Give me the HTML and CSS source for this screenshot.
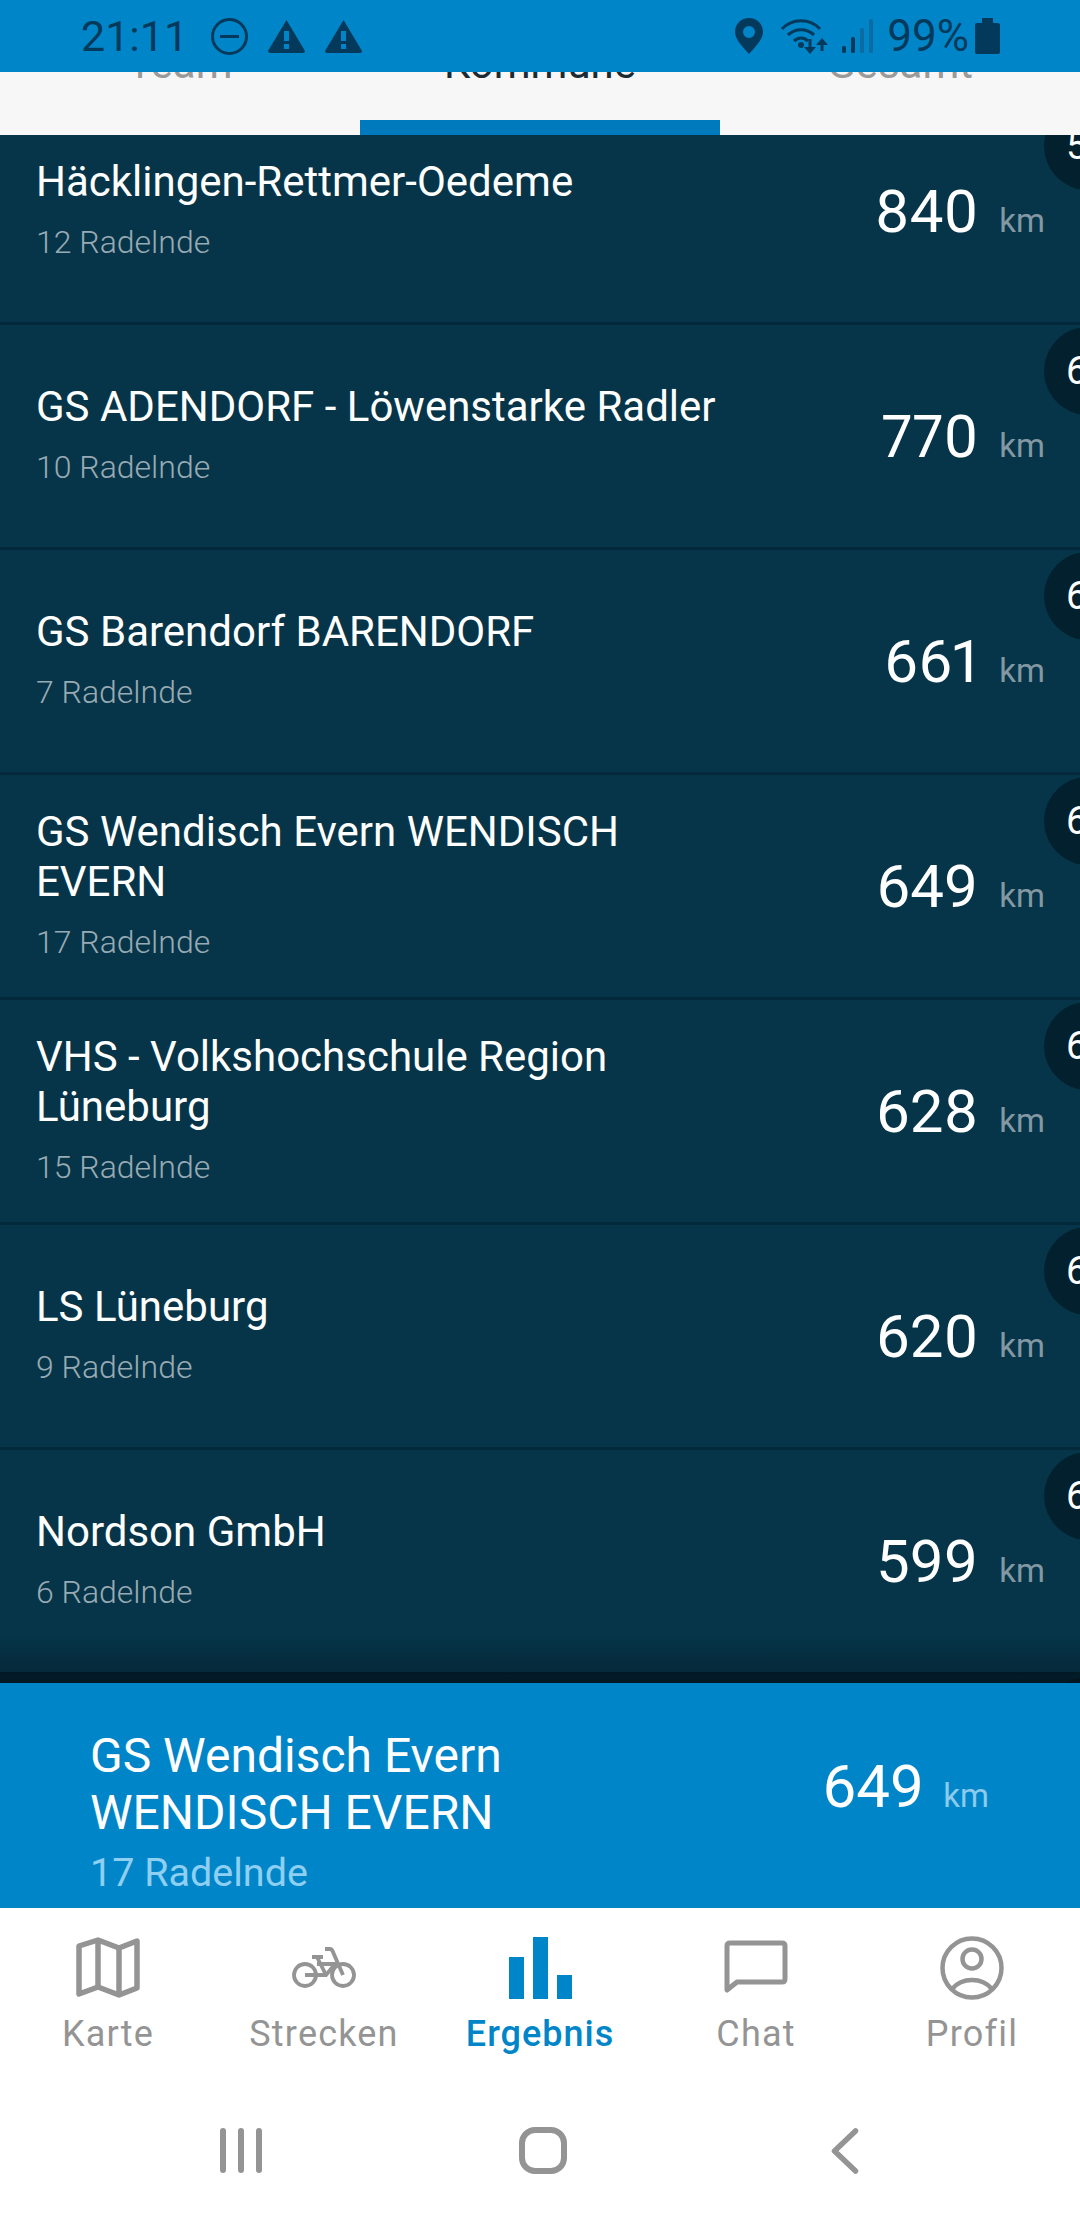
FILE: index.html
```html
<!DOCTYPE html>
<html lang="de">
<head>
  <meta charset="UTF-8">
  <meta name="viewport" content="width=device-width, initial-scale=1.0">
  <title>Ergebnis</title>
  <link rel="stylesheet" href="styles.css">
</head>
<body>
<div class="app">
  <div class="statusbar">
    <span class="clock">21:11</span>
    <svg class="st-dnd" viewBox="0 0 37 37"><circle cx="18.5" cy="18.5" r="17" fill="none" stroke="#033a5c" stroke-width="3"/><rect x="9" y="17" width="19" height="3" fill="#033a5c"/></svg>
    <svg class="st-warn" viewBox="0 0 37 33"><path fill-rule="evenodd" fill="#033a5c" d="M18.5 0 L37 31 Q37 33 35 33 L2 33 Q0 33 0 31 Z M16 11 V21 H21 V11 Z M16 24 V29 H21 V24 Z"/></svg>
    <svg class="st-warn" viewBox="0 0 37 33"><path fill-rule="evenodd" fill="#033a5c" d="M18.5 0 L37 31 Q37 33 35 33 L2 33 Q0 33 0 31 Z M16 11 V21 H21 V11 Z M16 24 V29 H21 V24 Z"/></svg>
    <div class="status-right">
      <svg class="st-pin" viewBox="0 0 28 36"><path fill-rule="evenodd" fill="#033a5c" d="M14 0 C6 0 0 6 0 14 C0 22 9 30 14 36 C19 30 28 22 28 14 C28 6 22 0 14 0 Z M14 8 A6 6 0 1 1 14 20 A6 6 0 1 1 14 8 Z"/></svg>
      <svg class="st-wifi" viewBox="0 0 48 36"><g fill="none" stroke="#033a5c" stroke-width="3.2"><path d="M2 11 C12 0 30 0 40 11"/><path d="M8 17 C15 10 27 10 34 17"/><path d="M14 23 C18 19 24 19 28 23"/></g><circle cx="21" cy="27" r="3" fill="#033a5c"/><path fill="#033a5c" d="M30 36 L24 29 H28.500 V21 H31.500 V29 H36 Z M42 20 L48 27 H43.500 V33 H40.500 V27 H36 Z"/></svg>
      <svg class="st-signal" viewBox="0 0 31 34"><rect x="0" y="27" width="4" height="7" rx="1.500" fill="#033a5c"/><rect x="9" y="18" width="4" height="16" rx="1.500" fill="#033a5c"/><rect x="18" y="9" width="4" height="25" rx="1.500" fill="#0a6ca3"/><rect x="27" y="0" width="4" height="34" rx="1.500" fill="#0a6ca3"/></svg>
      <span class="percent">99%</span>
      <svg class="st-batt" viewBox="0 0 25 36"><path fill="#033a5c" d="M7 0 H18 V5 H23 Q25 5 25 7 V34 Q25 36 23 36 H2 Q0 36 0 34 V7 Q0 5 2 5 H7 Z"/></svg>
    </div>
  </div>

  <div class="tabs">
    <div class="tab">Team</div>
    <div class="tab active">Kommune</div>
    <div class="tab">Gesamt</div>
  </div>

  <div class="list">
    <div class="row first">
      <div class="rank">59</div>
      <div class="info"><div class="name">Häcklingen-Rettmer-Oedeme</div><div class="count">12 Radelnde</div></div>
      <div class="dist"><span class="num">840</span><span class="km">km</span></div>
    </div>
    <div class="row">
      <div class="rank">60</div>
      <div class="info"><div class="name">GS ADENDORF - Löwenstarke Radler</div><div class="count">10 Radelnde</div></div>
      <div class="dist"><span class="num">770</span><span class="km">km</span></div>
    </div>
    <div class="row">
      <div class="rank">61</div>
      <div class="info"><div class="name">GS Barendorf BARENDORF</div><div class="count">7 Radelnde</div></div>
      <div class="dist"><span class="num">661</span><span class="km">km</span></div>
    </div>
    <div class="row">
      <div class="rank">62</div>
      <div class="info"><div class="name">GS Wendisch Evern WENDISCH EVERN</div><div class="count">17 Radelnde</div></div>
      <div class="dist"><span class="num">649</span><span class="km">km</span></div>
    </div>
    <div class="row">
      <div class="rank">63</div>
      <div class="info"><div class="name">VHS - Volkshochschule Region Lüneburg</div><div class="count">15 Radelnde</div></div>
      <div class="dist"><span class="num">628</span><span class="km">km</span></div>
    </div>
    <div class="row">
      <div class="rank">64</div>
      <div class="info"><div class="name">LS Lüneburg</div><div class="count">9 Radelnde</div></div>
      <div class="dist"><span class="num">620</span><span class="km">km</span></div>
    </div>
    <div class="row">
      <div class="rank">65</div>
      <div class="info"><div class="name">Nordson GmbH</div><div class="count">6 Radelnde</div></div>
      <div class="dist"><span class="num">599</span><span class="km">km</span></div>
    </div>
    <div class="row">
      <div class="rank">66</div>
    </div>
  </div>

  <div class="mine">
    <div class="mine-info">
      <div class="mine-name">GS Wendisch Evern<br>WENDISCH EVERN</div>
      <div class="mine-count">17 Radelnde</div>
    </div>
    <div class="dist mine-dist"><span class="num">649</span><span class="km">km</span></div>
  </div>

  <div class="nav">
    <div class="nav-item">
      <div class="nav-icon">
        <svg width="64" height="62" viewBox="0 0 64 62"><g fill="none" stroke="#949494" stroke-width="5.500" stroke-linejoin="round"><path d="M3 9 L22 3 L43 11 L61 4 V51 L43 58 L22 50 L3 57 Z"/><path d="M22 3 V50"/><path d="M43 11 V58"/></g></svg>
      </div>
      <div class="nav-label">Karte</div>
    </div>
    <div class="nav-item">
      <div class="nav-icon">
        <svg width="64" height="42" viewBox="0 0 64 42"><g fill="none" stroke="#949494" stroke-width="3.800"><circle cx="13" cy="28" r="11"/><circle cx="51" cy="28" r="11"/><path d="M13 28 H34 L43 17 H25"/><path d="M20 10 H31 M25 10 L34 28"/><path d="M33 2 H38 Q40 2 41 5 L51 28"/></g></svg>
      </div>
      <div class="nav-label">Strecken</div>
    </div>
    <div class="nav-item active">
      <div class="nav-icon">
        <div class="bars"><span class="bar bar-a"></span><span class="bar bar-b"></span><span class="bar bar-c"></span></div>
      </div>
      <div class="nav-label">Ergebnis</div>
    </div>
    <div class="nav-item">
      <div class="nav-icon">
        <svg width="64" height="56" viewBox="0 0 64 56"><path fill="none" stroke="#949494" stroke-width="5" stroke-linejoin="round" d="M3 6 Q3 3 6 3 H58 Q61 3 61 6 V39 Q61 42 58 42 H13 L3 50 Z"/></svg>
      </div>
      <div class="nav-label">Chat</div>
    </div>
    <div class="nav-item">
      <div class="nav-icon">
        <svg width="64" height="64" viewBox="0 0 64 64"><g fill="none" stroke="#949494" stroke-width="4.500"><circle cx="32" cy="32" r="29.500"/><circle cx="32" cy="23" r="9.500"/><path d="M12 53 C22 41 42 41 52 53"/></g></svg>
      </div>
      <div class="nav-label">Profil</div>
    </div>
  </div>

  <div class="sysnav">
    <div class="recents"><span></span><span></span><span></span></div>
    <div class="home"></div>
    <svg class="back" width="28" height="46" viewBox="0 0 28 46"><path fill="none" stroke="#949494" stroke-width="5.500" stroke-linecap="round" stroke-linejoin="round" d="M24.500 3 L3.500 23 L24.500 43"/></svg>
  </div>
</div>
</body>
</html>
```

FILE: styles.css
```css
* { box-sizing: border-box; }
html, body { margin: 0; padding: 0; }
body {
  font-family: Roboto, "Noto Sans", sans-serif;
  background: #fff;
}
.app {
  width: 1080px;
  height: 2220px;
  display: flex;
  flex-direction: column;
  overflow: hidden;
}

/* status bar */
.statusbar {
  height: 72px;
  flex: none;
  background: #0086c8;
  display: flex;
  align-items: center;
  padding: 0 80px 0 81px;
  color: #033a5c;
  position: relative;
  z-index: 2;
}
.clock { font-size: 43px; line-height: 72px; font-weight: 400; width: 130px; }
.st-dnd { width: 37px; height: 37px; margin-right: 20px; }
.st-warn { width: 37px; height: 33px; margin-right: 20px; }
.status-right { margin-left: auto; display: flex; align-items: center; }
.st-pin { width: 28px; height: 36px; margin-right: 17px; }
.st-wifi { width: 48px; height: 36px; margin-right: 14px; }
.st-signal { width: 31px; height: 34px; margin-right: 14px; }
.percent { font-size: 44px; line-height: 72px; margin-right: 6px; }
.st-batt { width: 25px; height: 36px; }

/* tabs, scrolled almost under the status bar */
.tabs {
  height: 63px;
  flex: none;
  background: #f7f7f7;
  display: flex;
  overflow: hidden;
}
.tab {
  width: 360px;
  text-align: center;
  font-size: 42px;
  line-height: 50px;
  margin-top: -33px;
  height: 96px;
  color: #9a9a9a;
}
.tab.active {
  color: #1c2a33;
  border-bottom: 15px solid #0079bd;
}

/* ranking list */
.list {
  flex: none;
  height: 1548px;
  background: #063549;
  overflow: hidden;
  position: relative;
}
.list::after {
  content: "";
  position: absolute;
  left: 0;
  right: 0;
  bottom: 0;
  height: 50px;
  background: linear-gradient(rgba(2,20,30,0), rgba(2,20,30,0.35) 78%, rgba(2,20,30,0.7) 78%, rgba(2,20,30,0.85));
}
.row {
  height: 225px;
  display: flex;
  align-items: center;
  padding: 0 35px 0 36px;
  border-bottom: 3px solid #04293a;
  position: relative;
}
.row.first { margin-top: -35px; }
.rank {
  position: absolute;
  left: 1044px;
  top: 2px;
  width: 88px;
  height: 88px;
  border-radius: 50%;
  background: #03202e;
  color: #fff;
  font-size: 38px;
  line-height: 88px;
  padding-left: 22px;
}
.info { width: 690px; }
.name { font-size: 42px; line-height: 50px; color: #fff; margin-top: -4px; }
.count {
  font-size: 32px;
  line-height: 40px;
  margin-top: 15px;
  font-weight: 300;
  color: #98aab3;
}
.dist {
  margin-left: auto;
  display: flex;
  align-items: baseline;
}
.num { font-size: 60px; color: #fff; font-variant-numeric: proportional-nums; }
.km { font-size: 33px; margin-left: 21px; color: #8398a3; }

/* own team */
.mine {
  height: 225px;
  flex: none;
  background: #0086c8;
  display: flex;
  padding: 44px 91px 0 90px;
  overflow: hidden;
}
.mine-name { font-size: 48px; line-height: 57px; color: #fff; }
.mine-count { font-size: 39.500px; line-height: 57px; margin-top: 3px; font-weight: 400; color: #8ecff2; }
.mine-dist { align-self: flex-start; margin-top: 24px; }
.mine-dist .km { color: #8ccbeb; margin-left: 19px; }

/* bottom navigation */
.nav {
  flex: none;
  height: 180px;
  display: flex;
  padding-top: 28px;
}
.nav-item { width: 216px; text-align: center; color: #949494; }
.nav-icon {
  height: 64px;
  display: flex;
  align-items: center;
  justify-content: center;
}
.nav-label {
  font-size: 36px;
  line-height: 44px;
  letter-spacing: 1.200px;
  margin-top: 12px;
}
.nav-item.active { color: #0086c8; }
.nav-item.active .nav-label { font-weight: 500; letter-spacing: 1px; }
.bars { display: flex; align-items: flex-end; gap: 9px; height: 62px; }
.bar { width: 15px; background: #0086c8; }
.bar-a { height: 42px; }
.bar-b { height: 62px; }
.bar-c { height: 24px; }

/* system navigation */
.sysnav {
  flex: none;
  height: 132px;
  display: flex;
  padding-top: 40px;
  align-items: flex-start;
}
.recents { display: flex; gap: 12px; margin-left: 220px; }
.recents span { width: 6px; height: 45px; border-radius: 3px; background: #949494; }
.home {
  width: 48px;
  height: 47px;
  margin-left: 257px;
  margin-top: -1px;
  border: 6px solid #949494;
  border-radius: 16px;
}
.back { margin-left: 264px; }
```
